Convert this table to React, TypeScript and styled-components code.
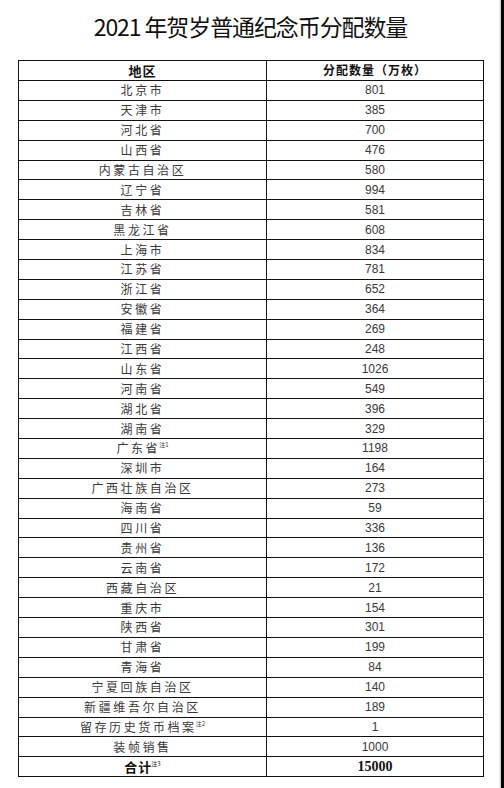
import styled, { createGlobalStyle } from "styled-components";

const GlobalStyle = createGlobalStyle`
  html, body {
    margin: 0;
    padding: 0;
    background: #ffffff;
  }
  body {
    font-family: "Liberation Sans", "Noto Sans CJK SC", sans-serif;
  }
`;

interface Row {
  region: string;
  amount: number;
  note?: string;
}

const rows: Row[] = [
  { region: "北京市", amount: 801 },
  { region: "天津市", amount: 385 },
  { region: "河北省", amount: 700 },
  { region: "山西省", amount: 476 },
  { region: "内蒙古自治区", amount: 580 },
  { region: "辽宁省", amount: 994 },
  { region: "吉林省", amount: 581 },
  { region: "黑龙江省", amount: 608 },
  { region: "上海市", amount: 834 },
  { region: "江苏省", amount: 781 },
  { region: "浙江省", amount: 652 },
  { region: "安徽省", amount: 364 },
  { region: "福建省", amount: 269 },
  { region: "江西省", amount: 248 },
  { region: "山东省", amount: 1026 },
  { region: "河南省", amount: 549 },
  { region: "湖北省", amount: 396 },
  { region: "湖南省", amount: 329 },
  { region: "广东省", amount: 1198, note: "注1" },
  { region: "深圳市", amount: 164 },
  { region: "广西壮族自治区", amount: 273 },
  { region: "海南省", amount: 59 },
  { region: "四川省", amount: 336 },
  { region: "贵州省", amount: 136 },
  { region: "云南省", amount: 172 },
  { region: "西藏自治区", amount: 21 },
  { region: "重庆市", amount: 154 },
  { region: "陕西省", amount: 301 },
  { region: "甘肃省", amount: 199 },
  { region: "青海省", amount: 84 },
  { region: "宁夏回族自治区", amount: 140 },
  { region: "新疆维吾尔自治区", amount: 189 },
  { region: "留存历史货币档案", amount: 1, note: "注2" },
  { region: "装帧销售", amount: 1000 },
];

const Page = styled.div`
  display: flex;
  width: 504px;
  min-height: 788px;
`;

const Sheet = styled.div`
  flex: 1;
  display: flex;
  flex-direction: column;
  align-items: center;
  padding-top: 13px;
`;

const EdgeStrip = styled.div`
  width: 3px;
  background: #050505;
  box-shadow: -1px 0 2px rgba(0, 0, 0, 0.25);
`;

const Title = styled.h1`
  margin: 0 0 20px 0;
  height: 27px;
  line-height: 27px;
  font-family: "Noto Sans CJK SC", "Liberation Sans", sans-serif;
  font-weight: 400;
  font-size: 23px;
  letter-spacing: -1.1px;
  color: #111;
`;

const Table = styled.table`
  width: 466px;
  align-self: flex-start;
  margin-left: 18px;
  border-collapse: collapse;
  table-layout: fixed;
`;

const Cell = styled.td<{ $bold?: boolean }>`
  border: 1px solid #111;
  height: 18.9px;
  padding: 0;
  text-align: center;
  vertical-align: middle;
  line-height: 18px;
  color: ${(p) => (p.$bold ? "#111" : "#3a3a3a")};
  font-weight: ${(p) => (p.$bold ? 700 : 400)};
`;

const RegionCell = styled(Cell)`
  width: 247px;
  font-family: "Noto Sans CJK SC", sans-serif;
  font-size: ${(p) => (p.$bold ? "13px" : "12px")};
  letter-spacing: ${(p) => (p.$bold ? "1px" : "2.6px")};
`;

const AmountCell = styled(Cell)<{ $serif?: boolean }>`
  font-family: ${(p) =>
    p.$serif
      ? `"Liberation Serif", serif`
      : `"Liberation Sans", "Noto Sans CJK SC", sans-serif`};
  font-size: ${(p) => (p.$serif ? "14px" : "12px")};
`;

const HeaderText = styled.span`
  font-family: "Noto Sans CJK SC", sans-serif;
  font-size: 12px;
  font-weight: 700;
  letter-spacing: 1px;
`;

const Note = styled.sup`
  font-size: 6px;
  letter-spacing: 0;
  font-weight: 400;
  vertical-align: 6px;
  line-height: 0;
  margin-left: -1px;
`;

export default function App() {
  return (
    <>
      <GlobalStyle />
      <Page>
        <Sheet>
          <Title>2021 年贺岁普通纪念币分配数量</Title>
          <Table>
            <tbody>
              <tr>
                <RegionCell $bold>地区</RegionCell>
                <AmountCell $bold>
                  <HeaderText>分配数量（万枚）</HeaderText>
                </AmountCell>
              </tr>
              {rows.map((r) => (
                <tr key={r.region}>
                  <RegionCell>
                    {r.region}
                    {r.note && <Note>{r.note}</Note>}
                  </RegionCell>
                  <AmountCell>{r.amount}</AmountCell>
                </tr>
              ))}
              <tr>
                <RegionCell $bold>
                  合计<Note>注3</Note>
                </RegionCell>
                <AmountCell $bold $serif>
                  15000
                </AmountCell>
              </tr>
            </tbody>
          </Table>
        </Sheet>
        <EdgeStrip />
      </Page>
    </>
  );
}
